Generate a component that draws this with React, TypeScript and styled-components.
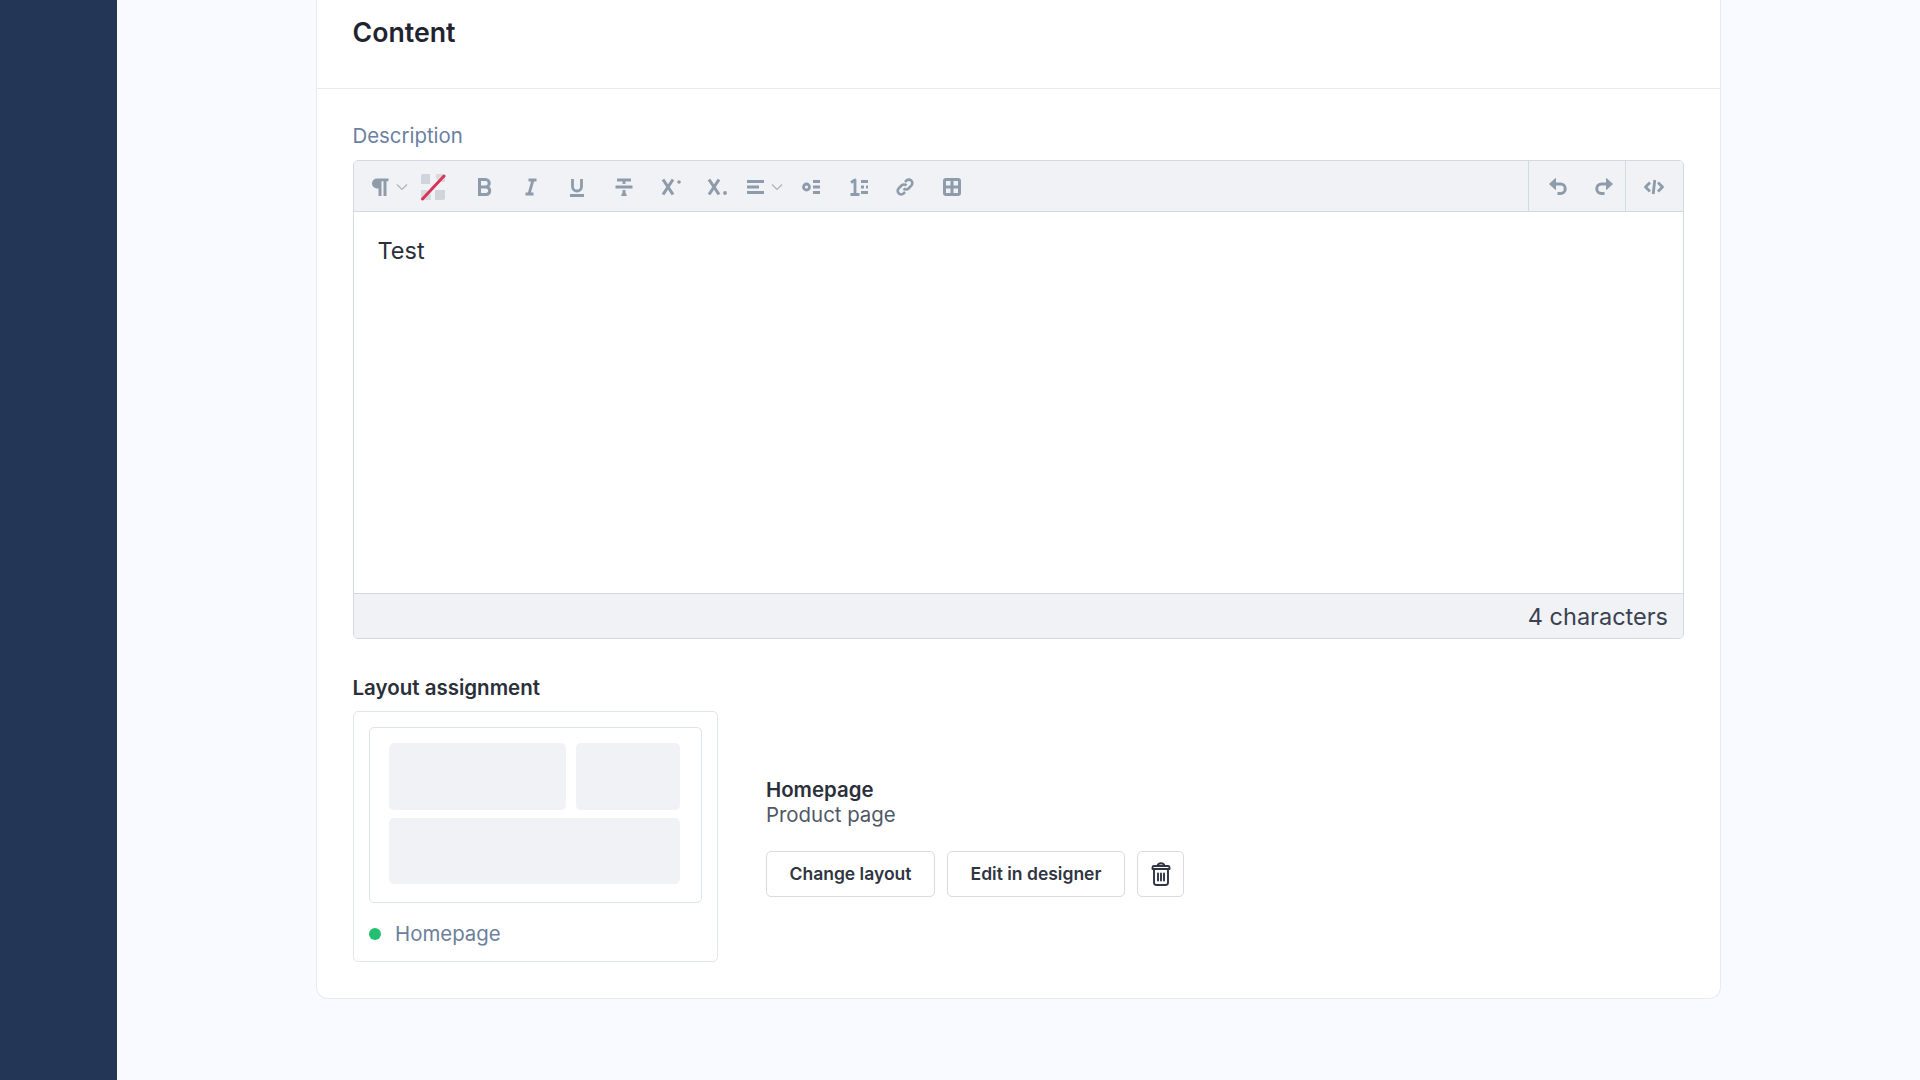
import React from 'react';
import styled, { createGlobalStyle } from 'styled-components';

const GlobalStyle = createGlobalStyle`
  html, body {
    margin: 0;
    padding: 0;
    height: 100%;
    background: #f9faff;
    font-family: Inter, "Noto Sans", sans-serif;
    overflow: hidden;
  }
`;

const Page = styled.div`
  display: flex;
  height: 1080px;
  overflow: hidden;
  background: #f9faff;
`;

const Sidebar = styled.aside`
  width: 117px;
  flex: none;
  background: #233656;
`;

const Main = styled.main`
  flex: 1;
  padding-left: 199px;
`;

const Card = styled.section`
  width: 1405px;
  height: 999px;
  box-sizing: border-box;
  background: #fff;
  border: 1.5px solid #e8eaf1;
  border-top: none;
  border-radius: 0 0 12px 12px;
`;

const CardHeader = styled.header`
  height: 89px;
  box-sizing: border-box;
  padding: 16px 35.5px 0;
  border-bottom: 1.5px solid #e8eaf1;
`;

const CardTitle = styled.h2`
  margin: 0;
  font-size: 26.7px;
  line-height: 32px;
  font-weight: 600;
  color: #1f2430;
`;

const CardBody = styled.div`
  padding: 34px 35.5px 0;
`;

const FieldLabel = styled.label`
  display: block;
  font-size: 20.4px;
  line-height: 26px;
  color: #6b7fa3;
  margin-bottom: 11px;
`;

const Editor = styled.div`
  border: 1.5px solid #d4d8e0;
  border-radius: 5px;
  overflow: hidden;
  width: 1331px;
  box-sizing: border-box;
`;

const Toolbar = styled.div`
  display: flex;
  justify-content: space-between;
  height: 51px;
  box-sizing: border-box;
  background: #f0f2f6;
  border-bottom: 1.5px solid #d4d8e0;
`;

const ToolGroup = styled.div`
  display: flex;
  align-items: stretch;
`;

const ToolActions = styled.div`
  display: flex;
  align-items: stretch;
  gap: 6px;
  width: 97px;
  box-sizing: border-box;
  padding-left: 9.5px;
  border-left: 1.5px solid #d3dae3;
`;

const ToolEnd = styled.div`
  display: flex;
  align-items: center;
  justify-content: center;
  width: 58px;
  padding: 2px 1px 0 0;
  box-sizing: border-box;
  color: #8e9bab;
  border-left: 1.5px solid #d3dae3;
`;

const ToolButton = styled.button<{ $w?: number; $pl?: number; $pr?: number; $gap?: number }>`
  display: flex;
  align-items: center;
  justify-content: center;
  gap: ${p => p.$gap ?? 5}px;
  box-sizing: border-box;
  width: ${p => p.$w ?? 46.7}px;
  padding: 2px ${p => p.$pr ?? 0}px 0 ${p => p.$pl ?? 0}px;
  border: none;
  background: transparent;
  color: #8e9bab;
`;

const EditArea = styled.div`
  height: 381px;
  box-sizing: border-box;
  padding: 24px 24px 0;
  font-size: 23.5px;
  line-height: 30px;
  color: #2b2f38;
  background: #fff;
`;

const StatusBar = styled.div`
  height: 45px;
  box-sizing: border-box;
  padding: 0 14.5px;
  display: flex;
  align-items: center;
  justify-content: flex-end;
  background: #f0f2f6;
  border-top: 1.5px solid #d4d8e0;
  font-size: 23.5px;
  color: #3a4150;
`;

const SectionLabel = styled.div`
  margin-top: 36px;
  font-size: 20.5px;
  line-height: 26px;
  font-weight: 600;
  color: #2a2f3a;
`;

const Assignment = styled.div`
  display: flex;
  margin-top: 10px;
  gap: 48px;
`;

const LayoutCard = styled.div`
  width: 365.5px;
  height: 251px;
  box-sizing: border-box;
  padding: 15px;
  border: 1.5px solid #e2e6ed;
  border-radius: 5px;
`;

const Preview = styled.div`
  display: grid;
  grid-template-columns: 177.5px 104.5px;
  grid-template-rows: 67px 66px;
  gap: 8px 9.5px;
  width: 333.5px;
  height: 175.5px;
  box-sizing: border-box;
  padding: 15px 19px 0;
  border: 1.5px solid #dfe3ea;
  border-radius: 5px;
`;

const PreviewBlock = styled.div<{ $wide?: boolean }>`
  background: #f0f2f6;
  border-radius: 5px;
  grid-column: ${p => (p.$wide ? '1 / 3' : 'auto')};
`;

const LayoutFooter = styled.div`
  display: flex;
  align-items: center;
  gap: 14.5px;
  margin-top: 18px;
  font-size: 20.4px;
  line-height: 26px;
  color: #6d7f9c;
`;

const StatusDot = styled.span`
  width: 12px;
  height: 12px;
  border-radius: 50%;
  background: #22c070;
`;

const AssignmentInfo = styled.div`
  padding-top: 66px;
`;

const InfoName = styled.div`
  font-size: 20.4px;
  line-height: 25px;
  font-weight: 600;
  color: #2a2f3a;
`;

const InfoType = styled.div`
  font-size: 20.4px;
  line-height: 25px;
  color: #4f5866;
`;

const ButtonRow = styled.div`
  display: flex;
  gap: 12px;
  margin-top: 24px;
`;

const OutlineButton = styled.button<{ $w: number }>`
  display: flex;
  align-items: center;
  justify-content: center;
  width: ${p => p.$w}px;
  height: 46px;
  padding: 0 0 1px;
  background: #fff;
  border: 1.5px solid #d9dbe3;
  border-radius: 5px;
  font-family: inherit;
  font-size: 17.5px;
  font-weight: 600;
  color: #2f3542;
`;

const Ico = ({ children, weight = 2.8 }: { children: React.ReactNode; weight?: number }) => (
  <svg width="24" height="24" viewBox="0 0 24 24" fill="none" stroke="currentColor" strokeWidth={weight} strokeLinecap="butt" strokeLinejoin="round">
    {children}
  </svg>
);

const Chevron = () => (
  <svg width="12" height="8" viewBox="0 0 12 8" fill="none" stroke="#a9b3bf" strokeWidth="1.2">
    <path d="M1 1.5l5 5 5-5" />
  </svg>
);

export default function App() {
  return (
    <>
      <GlobalStyle />
      <Page>
        <Sidebar />
        <Main>
          <Card>
            <CardHeader>
              <CardTitle>Content</CardTitle>
            </CardHeader>
            <CardBody>
              <FieldLabel>Description</FieldLabel>
              <Editor>
                <Toolbar>
                  <ToolGroup>
                    <ToolButton $w={56} $pl={12} $gap={6}>
                      <svg width="22" height="24" viewBox="0 0 22 24" fill="currentColor">
                        <path d="M9 3.500h11.500v2.800h-2V21h-3V6.300h-2V21h-3v-7.500H9a5 5 0 0 1 0-10z" />
                      </svg>
                      <Chevron />
                    </ToolButton>
                    <ToolButton $w={51} $pr={5}>
                      <svg width="30" height="28" viewBox="0 0 30 28" fill="none">
                        <path d="M3 3a2 2 0 0 1 2-2h7v10H3z" fill="#cfd5db" />
                        <path d="M17 17h10v8a2 2 0 0 1-2 2h-8z" fill="#cfd5db" />
                        <path d="M18 1h7a2 2 0 0 1 2 2v6h-5l-4-4zM3 17h6l4 5v5H5a2 2 0 0 1-2-2z" fill="#d6dbe1" />
                        <path d="M4.500 26L26 3" stroke="#dc3458" strokeWidth="3" strokeLinecap="round" />
                      </svg>
                    </ToolButton>
                    <ToolButton><Ico weight={3}><path d="M6 4.500h7.500a3.700 3.700 0 0 1 0 7.500H8h6.500a3.800 3.800 0 0 1 0 7.500H6M7.500 4.500v15" /></Ico></ToolButton>
                    <ToolButton><Ico><path d="M9.500 5h8M6.500 19h8M14 5l-4 14" /></Ico></ToolButton>
                    <ToolButton><Ico><path d="M7.500 4v7.500a4.500 4.500 0 0 0 9 0V4M5 20.500h14" /></Ico></ToolButton>
                    <ToolButton><Ico><path d="M5 5h14M12 5v4M3.500 12h17M12 15v4" /><path d="M9.500 20.500h5l-2.500-4z" fill="currentColor" strokeWidth="1" /></Ico></ToolButton>
                    <ToolButton><Ico weight={3.1}><path d="M4 4.500l10 15M14 4.500l-10 15" /><circle cx="20" cy="7" r="1.800" fill="currentColor" stroke="none" /></Ico></ToolButton>
                    <ToolButton><Ico weight={3.1}><path d="M4 4.500l10 15M14 4.500l-10 15" /><circle cx="20" cy="18" r="1.900" fill="currentColor" stroke="none" /></Ico></ToolButton>
                    <ToolButton $w={48} $gap={6}>
                      <svg width="18" height="24" viewBox="0 0 18 24" fill="none" stroke="currentColor" strokeWidth="2.800">
                        <path d="M0 6.500h17M0 12h12M0 17.500h17" />
                      </svg>
                      <Chevron />
                    </ToolButton>
                    <ToolButton><Ico><circle cx="6.500" cy="12" r="3" /><path d="M13 6.500h7M13 12h7M13 17.500h7" /></Ico></ToolButton>
                    <ToolButton><Ico><path d="M4 7.500L8 5v14M3.500 19.500h9" /><path d="M14 6.500h7M14 12h3M19 12h2M14 17.500h7" /></Ico></ToolButton>
                    <ToolButton><Ico weight={2.6}><path d="M10.500 13.500a3.500 3.500 0 0 0 5 0l2.800-2.800a3.500 3.500 0 0 0-5-5l-1.300 1.300M13.500 10.500a3.500 3.500 0 0 0-5 0l-2.800 2.800a3.500 3.500 0 0 0 5 5l1.300-1.300" /></Ico></ToolButton>
                    <ToolButton><Ico weight={3}><rect x="4.500" y="4.500" width="15" height="15" rx="1.500" /><path d="M4.500 12h15M12 4.500v15" /></Ico></ToolButton>
                  </ToolGroup>
                  <ToolGroup>
                    <ToolActions>
                      <ToolButton $w={40}>
                        <Ico weight={3}><path d="M6 9h8.500a4.700 4.700 0 0 1 0 9.500h-3" /><path d="M9.500 3.500v11L3.500 9z" fill="currentColor" strokeWidth="1" /></Ico>
                      </ToolButton>
                      <ToolButton $w={40}>
                        <Ico weight={3}><path d="M18 9H9.500a4.700 4.700 0 0 0 0 9.500h3" /><path d="M14.500 3.500v11l6-5.500z" fill="currentColor" strokeWidth="1" /></Ico>
                      </ToolButton>
                    </ToolActions>
                    <ToolEnd>
                      <Ico><path d="M8 7.500L3.500 12 8 16.500M16 7.500l4.500 4.500-4.500 4.500M12.800 5l-1.600 14" /></Ico>
                    </ToolEnd>
                  </ToolGroup>
                </Toolbar>
                <EditArea>Test</EditArea>
                <StatusBar>4 characters</StatusBar>
              </Editor>
              <SectionLabel>Layout assignment</SectionLabel>
              <Assignment>
                <LayoutCard>
                  <Preview>
                    <PreviewBlock />
                    <PreviewBlock />
                    <PreviewBlock $wide />
                  </Preview>
                  <LayoutFooter>
                    <StatusDot />
                    Homepage
                  </LayoutFooter>
                </LayoutCard>
                <AssignmentInfo>
                  <InfoName>Homepage</InfoName>
                  <InfoType>Product page</InfoType>
                  <ButtonRow>
                    <OutlineButton $w={169}>Change layout</OutlineButton>
                    <OutlineButton $w={178}>Edit in designer</OutlineButton>
                    <OutlineButton $w={47}>
                      <svg width="26" height="26" viewBox="0 0 26 26" fill="none" stroke="#2f3542" strokeWidth="1.900" strokeLinecap="round" strokeLinejoin="round">
                        <path d="M4.500 6.500a1.500 1.500 0 0 1 1.500-1.500h14a1.500 1.500 0 0 1 1.500 1.500V8h-17zM9.500 5a3.500 2.800 0 0 1 7 0M6 8v13.500A2.500 2.500 0 0 0 8.500 24h9a2.500 2.500 0 0 0 2.500-2.500V8" />
                        <path d="M10 12.500v7M13 12.500v7M16 12.500v7" />
                      </svg>
                    </OutlineButton>
                  </ButtonRow>
                </AssignmentInfo>
              </Assignment>
            </CardBody>
          </Card>
        </Main>
      </Page>
    </>
  );
}
